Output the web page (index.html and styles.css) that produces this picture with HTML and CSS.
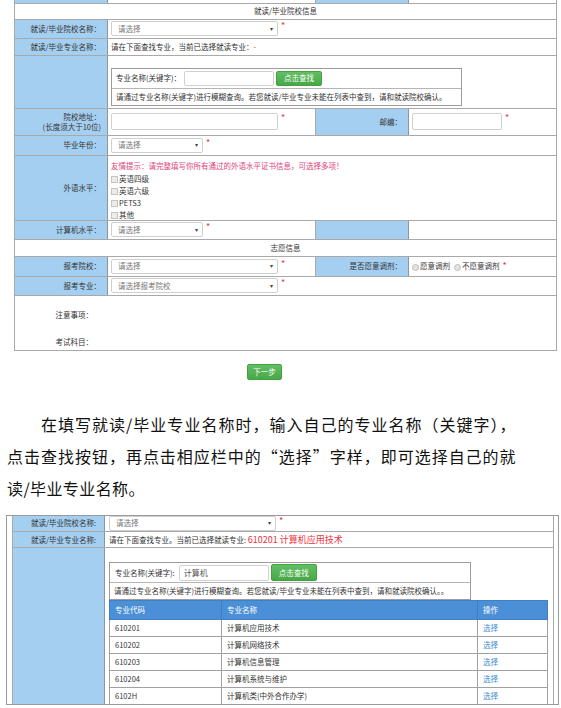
FILE: index.html
```html
<!DOCTYPE html>
<html lang="zh-CN">
<head>
<meta charset="utf-8">
<title>就读信息填写说明</title>
<link rel="stylesheet" href="styles.css">
</head>
<body>
<div class="shot1">
  <table class="form">
    <colgroup><col class="c1"><col class="c2"><col class="c3"><col class="c4"></colgroup>
    <tr class="cut"><td class="lbl"></td><td></td><td class="lbl"></td><td></td></tr>
    <tr class="h16"><td colspan="4" class="title">就读/毕业院校信息</td></tr>
    <tr class="h19"><td class="lbl">就读/毕业院校名称：</td><td colspan="3"><div class="field"><span class="sel w167"><span>请选择</span><span class="arr">▾</span></span><span class="req">*</span></div></td></tr>
    <tr class="h17"><td class="lbl">就读/毕业专业名称：</td><td colspan="3">请在下面查找专业，当前已选择就读专业：<span class="red">-</span></td></tr>
    <tr class="h53"><td class="lbl"></td><td colspan="3" class="searchcell">
      <div class="sbox">
        <div class="srow"><span>专业名称(关键字)：</span><span class="inp"></span><span class="btn">点击查找</span></div>
        <div class="shint">请通过专业名称(关键字)进行模糊查询。若您就读/毕业专业未能在列表中查到，请和就读院校确认。</div>
      </div>
    </td></tr>
    <tr class="h27"><td class="lbl">院校地址：<br>(长度须大于10位)</td><td><div class="field"><span class="inp w167"></span><span class="req">*</span></div></td><td class="lbl">邮编：</td><td><div class="field"><span class="inp w90"></span><span class="req">*</span></div></td></tr>
    <tr class="h20"><td class="lbl">毕业年份：</td><td colspan="3"><div class="field"><span class="sel w92"><span>请选择</span><span class="arr">▾</span></span><span class="req">*</span></div></td></tr>
    <tr class="h65"><td class="lbl">外语水平：</td><td colspan="3" class="langs">
      <div class="tip">友情提示：请完整填写你所有通过的外语水平证书信息，可选择多项！</div>
      <div class="chk"><span class="cb"></span>英语四级</div>
      <div class="chk"><span class="cb"></span>英语六级</div>
      <div class="chk"><span class="cb"></span>PETS3</div>
      <div class="chk"><span class="cb"></span>其他</div>
    </td></tr>
    <tr class="h19"><td class="lbl">计算机水平：</td><td><div class="field"><span class="sel w92"><span>请选择</span><span class="arr">▾</span></span><span class="req">*</span></div></td><td class="lbl"></td><td></td></tr>
    <tr class="h17"><td colspan="4" class="title">志愿信息</td></tr>
    <tr class="h20"><td class="lbl">报考院校：</td><td><div class="field"><span class="sel w167"><span>请选择</span><span class="arr">▾</span></span><span class="req">*</span></div></td><td class="lbl">是否愿意调剂：</td><td><div class="field radios"><span class="rd"></span>愿意调剂<span class="rd gap"></span>不愿意调剂<span class="req">*</span></div></td></tr>
    <tr class="h19"><td class="lbl">报考专业：</td><td colspan="3"><div class="field"><span class="sel w167"><span>请选择报考院校</span><span class="arr">▾</span></span><span class="req">*</span></div></td></tr>
    <tr class="h55"><td colspan="4" class="notes">
      <div class="note">注意事项：</div>
      <div class="note">考试科目：</div>
    </td></tr>
  </table>
</div>

<div class="next"><span class="btn nextbtn">下一步</span></div>

<p class="para">
  <span class="ln first">在填写就读/毕业专业名称时，输入自己的专业名称（关键字），</span>
  <span class="ln">点击查找按钮，再点击相应栏中的“选择”字样，即可选择自己的就</span>
  <span class="ln last">读/毕业专业名称。</span>
</p>

<div class="shot2">
  <table class="form2">
    <colgroup><col class="d1"><col class="d2"></colgroup>
    <tr class="g16"><td class="lbl">就读/毕业院校名称:</td><td><div class="field"><span class="sel w167"><span>请选择</span><span class="arr">▾</span></span><span class="req">*</span></div></td></tr>
    <tr class="g16"><td class="lbl">就读/毕业专业名称:</td><td>请在下面查找专业。当前已选择就读专业: <span class="chosen">610201 计算机应用技术</span></td></tr>
    <tr><td class="lbl"></td><td class="searchcell2">
      <div class="sbox sbox2">
        <div class="srow"><span>专业名称(关键字):</span><span class="inp">计算机</span><span class="btn">点击查找</span></div>
        <div class="shint">请通过专业名称(关键字)进行模糊查询。若您就读/毕业专业未能在列表中查到，请和就读院校确认。。</div>
      </div>
      <table class="res">
        <colgroup><col class="e1"><col class="e2"><col class="e3"></colgroup>
        <tr class="rh"><th>专业代码</th><th>专业名称</th><th>操作</th></tr>
        <tr><td>610201</td><td>计算机应用技术</td><td class="pick">选择</td></tr>
        <tr><td>610202</td><td>计算机网络技术</td><td class="pick">选择</td></tr>
        <tr><td>610203</td><td>计算机信息管理</td><td class="pick">选择</td></tr>
        <tr><td>610204</td><td>计算机系统与维护</td><td class="pick">选择</td></tr>
        <tr><td>6102H</td><td>计算机类(中外合作办学)</td><td class="pick">选择</td></tr>
      </table>
    </td></tr>
  </table>
</div>
</body>
</html>
```

FILE: styles.css
```css
body {
  margin: 0;
  background: #fff;
  font-family: "Noto Sans CJK SC", "Noto Sans", sans-serif;
}

/* ---------- screenshot 1 ---------- */
.shot1 {
  margin-left: 14px;
  width: 542px;
}
.form {
  border-collapse: collapse;
  table-layout: fixed;
  width: 542px;
  font-size: 7.5px;
  line-height: 10px;
  color: #333;
}
.c1 { width: 93px; }
.c2 { width: 208px; }
.c3 { width: 93px; }
.c4 { width: 148px; }
.form td {
  border: 1px solid #a9a9a9;
  padding: 0 3px;
  vertical-align: middle;
  white-space: nowrap;
}
.form .lbl {
  background: #a5cff1;
  text-align: right;
  padding-right: 6px;
  border-right-color: #8a96a0;
}
.form .cut td { border-top: none; padding: 0; }
.cut { height: 3px; }
.h16 { height: 16px; }
.h17 { height: 17px; }
.h19 { height: 19px; }
.h20 { height: 20px; }
.h27 { height: 27px; }
.h53 { height: 53px; }
.h55 { height: 55px; }
.h65 { height: 65px; }
.form .title { text-align: center; color: #333; }

.field {
  display: flex;
  align-items: center;
  gap: 3px;
}
.sel {
  display: inline-flex;
  justify-content: space-between;
  align-items: center;
  box-sizing: border-box;
  height: 15px;
  padding: 0 4px 0 6px;
  border: 1px solid #cfcfcf;
  border-radius: 2px;
  background: #fff;
  color: #777;
}
.arr { font-size: 6px; color: #444; }
.w167 { width: 167px; }
.w92 { width: 92px; }
.w90 { width: 90px; }
.req {
  color: #f0303a;
  font-size: 9px;
  align-self: flex-start;
  line-height: 10px;
}
.red { color: #f0303a; }

.inp {
  display: inline-block;
  box-sizing: border-box;
  height: 15px;
  border: 1px solid #d0d0d0;
  border-radius: 2px;
  background: #fff;
}
.inp.w167, .inp.w90 { height: 17px; }

.searchcell { vertical-align: bottom !important; padding: 0 0 2px 3px !important; }
.sbox {
  width: 351px;
  box-sizing: border-box;
  border: 1px solid #9c9c9c;
  background: #fff;
}
.srow {
  display: flex;
  align-items: center;
  height: 19px;
  padding-left: 4px;
  border-bottom: 1px solid #b5b5b5;
}
.srow .inp {
  width: 90px;
  margin-left: 3px;
}
.btn {
  display: inline-flex;
  align-items: center;
  justify-content: center;
  box-sizing: border-box;
  height: 15px;
  width: 46px;
  margin-left: 2px;
  background: linear-gradient(#62bf62, #48a848);
  border: 1px solid #43a043;
  border-radius: 2px;
  color: #fff;
}
.shint {
  height: 16px;
  display: flex;
  align-items: center;
  padding-left: 4px;
}

.langs { padding-top: 2px !important; }
.tip { color: #e0417a; line-height: 12px; margin-top: 2px; }
.chk {
  display: flex;
  align-items: flex-end;
  height: 12px;
}
.cb {
  display: inline-block;
  width: 5px;
  height: 5px;
  border: 1px solid #c4c4c4;
  background: #ececec;
  margin-right: 1px;
  margin-bottom: 1px;
}
.radios { gap: 0; }
.rd {
  display: inline-block;
  width: 5px;
  height: 5px;
  border: 1px solid #bdbdbd;
  border-radius: 50%;
  background: #e2e2e2;
  margin-right: 1px;
  margin-top: 3px;
}
.rd.gap { margin-left: 4px; }
.radios .req { margin-left: 3px; }

.form .notes {
  padding: 0;
  vertical-align: top;
}
.note {
  width: 78px;
  text-align: right;
  line-height: 10px;
  margin-top: 14px;
}
.note + .note { margin-top: 17px; }

/* ---------- next button ---------- */
.next {
  margin-top: 13px;
  padding-left: 247px;
  height: 16px;
  font-size: 7.5px;
}
.nextbtn {
  width: 35px;
  height: 16px;
  margin-left: 0;
}

/* ---------- paragraph ---------- */
.para {
  margin: 28px 0 0 7px;
  width: 509px;
  font-size: 16px;
  letter-spacing: 0.4px;
  line-height: 32px;
  color: #111;
}
.ln {
  display: block;
  text-align: justify;
  text-align-last: justify;
}
.ln.first { padding-left: 34px; }
.ln.last { text-align-last: left; }

/* ---------- screenshot 2 ---------- */
.shot2 {
  margin: 11px 0 0 6px;
  width: 553px;
  height: 190px;
  box-sizing: border-box;
  border: 1px solid #9a9a9a;
  overflow: hidden;
}
.form2 {
  margin-left: 5px;
  border-collapse: collapse;
  table-layout: fixed;
  width: 541px;
  font-size: 7.5px;
  line-height: 10px;
  color: #333;
}
.d1 { width: 92px; }
.d2 { width: 449px; }
.form2 > tbody > tr > td {
  border: 1px solid #a9a9a9;
  padding: 0 4px;
  white-space: nowrap;
  vertical-align: middle;
}
.form2 > tbody > tr:first-child > td { border-top: none; }
.form2 .lbl {
  background: #a5cff1;
  text-align: right;
  padding-right: 8px;
  border-right-color: #8a96a0;
}
.g16 { height: 16px; }
.chosen { color: #f0303a; font-size: 9px; }
.form2 .searchcell2 { vertical-align: top; padding: 14px 0 0 4px; }
.sbox2 { width: 362px; }
.sbox2 .srow { height: 19px; padding-left: 5px; }
.sbox2 .inp {
  width: 90px;
  height: 16px;
  margin-left: 4px;
  padding-left: 4px;
  line-height: 14px;
  font-size: 8px;
  color: #555;
}
.sbox2 .btn { height: 17px; }
.res {
  border-collapse: collapse;
  table-layout: fixed;
  width: 438px;
  font-size: 7.5px;
  color: #333;
}
.e1 { width: 112px; }
.e2 { width: 256px; }
.e3 { width: 70px; }
.res th {
  background: #4b8fd6;
  color: #fff;
  font-weight: normal;
  text-align: left;
  height: 18px;
  padding: 0 5px;
  border: 1px solid #3f7fc2;
}
.res td {
  height: 16px;
  padding: 0 5px;
  border: 1px solid #a0a0a0;
  background: #fff;
}
.res .pick { color: #3f8fd2; }
```
